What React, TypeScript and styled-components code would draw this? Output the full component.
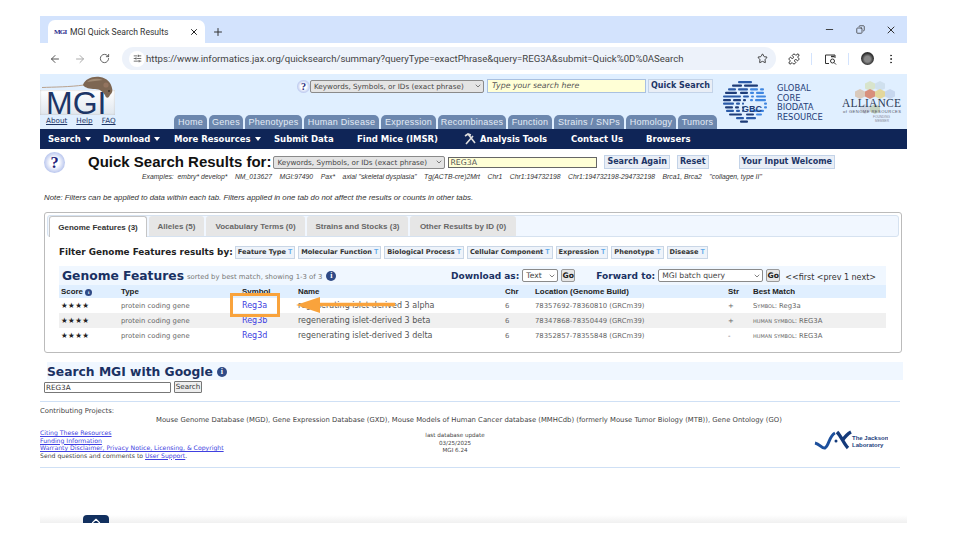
import React from "react";
import styled, { createGlobalStyle } from "styled-components";
import { ArrowLeft, ArrowRight, RotateCw, SlidersHorizontal, Star, Puzzle, X, Plus, Minus, MoreVertical, Copy, ChevronDown, ChevronUp } from "lucide-react";

const GlobalStyle = createGlobalStyle`
  html, body { margin: 0; padding: 0; background: #fff; overflow: hidden; }
  * { box-sizing: border-box; }
`;

const verdana = `"DejaVu Sans", sans-serif`;
const arial = `"Liberation Sans", Arial, sans-serif`;
const navy = "#0f2557";

const Page = styled.div`
  width: 960px;
  height: 540px;
  padding: 16px 53px 0 40px;
  font-family: ${arial};
`;

const Window = styled.div`
  position: relative;
  width: 867px;
  height: 507px;
  background: #fff;
  overflow: hidden;
`;

const TabStrip = styled.div`
  height: 27px;
  background: #d3e3fd;
  display: flex;
  align-items: flex-end;
  padding-left: 8px;
`;

const BrowserTab = styled.div`
  width: 157px;
  height: 23px;
  background: #fff;
  border-radius: 7px 7px 0 0;
  display: flex;
  align-items: center;
  padding: 0 6px;
  font: 8.6px Roboto, sans-serif;
  color: #333;
  svg { color: #222; }
`;

const Favicon = styled.span`
  font: bold 7px "Liberation Serif", serif;
  color: #2a2a8c;
  width: 16px;
  flex: none;
  letter-spacing: -0.8px;
`;

const TabTitle = styled.span`
  flex: 1;
  white-space: nowrap;
`;

const NewTab = styled.div`
  margin: 0 0 5px 7px;
  color: #333;
  display: flex;
`;

const WindowControls = styled.div`
  margin-left: auto;
  align-self: center;
  width: 73px;
  margin-right: 10px;
  display: flex;
  justify-content: space-between;
  color: #333;
`;

const Toolbar = styled.div`
  height: 31px;
  display: flex;
  align-items: center;
  padding-left: 9px;
  color: #555;
`;

const NavIcons = styled.div`
  width: 73px;
  display: flex;
  justify-content: space-between;
  padding-right: 12px;
`;

const UrlPill = styled.div`
  width: 654px;
  height: 23px;
  background: #edf2fa;
  border-radius: 12px;
  display: flex;
  align-items: center;
  padding: 0 8px 0 4px;
  font: 9.6px Roboto, sans-serif;
  color: #444;
`;

const TuneBadge = styled.span`
  width: 16px;
  height: 16px;
  border-radius: 50%;
  background: #fff;
  display: flex;
  align-items: center;
  justify-content: center;
  margin-right: 1px;
  margin-left: 3px;
`;

const UrlText = styled.span`
  flex: 1;
  white-space: nowrap;
`;

const ToolIcons = styled.div`
  flex: 1;
  display: flex;
  align-items: center;
  padding: 0 10px 0 12px;
  justify-content: space-between;
  color: #333;
`;

const Separator = styled.span`
  width: 1px;
  height: 12px;
  background: #d3e3fd;
`;

const Avatar = styled.span`
  width: 13px;
  height: 13px;
  border-radius: 50%;
  background: radial-gradient(circle at 50% 55%, #888 0 30%, #333 60%, #222);
`;

const Header = styled.div`
  height: 55px;
  background: #e0efff;
  display: flex;
`;

const LogoColumn = styled.div`
  width: 134px;
  flex: none;
  position: relative;
`;

const LogoBox = styled.div`
  margin-top: 16px;
  width: 75px;
  height: 25px;
  background: linear-gradient(#ffffff, #dfe6ee);
  box-shadow: inset 0 0 2px #bbb;
  font: 32px/27px ${arial};
  color: #1d3566;
  padding-left: 6px;
`;

const Mouse = styled.svg`
  position: absolute;
  left: 0;
  top: 0;
`;

const LogoLinks = styled.div`
  display: flex;
  gap: 9px;
  padding: 1px 0 0 6px;
  font: 7.2px ${verdana};
  a { color: #1d3566; text-decoration: underline; }
`;

const CenterColumn = styled.div`
  width: 548px;
  flex: none;
  display: flex;
  flex-direction: column;
  justify-content: space-between;
`;

const QuickRow = styled.div`
  display: flex;
  align-items: center;
  padding: 5px 0 0 123px;
`;

const HelpDot = styled.span<{ $size: number }>`
  width: ${(p) => p.$size}px;
  height: ${(p) => p.$size}px;
  flex: none;
  border-radius: 50%;
  background: radial-gradient(circle at 50% 50%, #ffffff 0 30%, #a9b9ea 80%, #8296d8);
  color: #23237a;
  font: bold ${(p) => p.$size * 0.78}px/${(p) => p.$size}px "Liberation Serif", serif;
  text-align: center;
`;

const FakeSelect = styled.span<{ $w: number; $grey?: boolean; $size?: number }>`
  width: ${(p) => p.$w}px;
  flex: none;
  height: 13px;
  border: 1px solid #8a8a8a;
  border-radius: 2px;
  background: ${(p) => (p.$grey ? "#e4e4e4" : "#fff")};
  color: #444;
  font: ${(p) => p.$size ?? 7.2}px/11px ${verdana};
  display: flex;
  align-items: center;
  justify-content: space-between;
  padding: 0 1px 0 3px;
  white-space: nowrap;
  overflow: hidden;
`;

const YellowInput = styled.span<{ $w: number; $dark?: boolean; $italic?: boolean }>`
  width: ${(p) => p.$w}px;
  flex: none;
  height: ${(p) => (p.$dark ? 11 : 14)}px;
  margin-left: 3px;
  background: #ffffd6;
  border: 1px solid ${(p) => (p.$dark ? "#666" : "#a9c0e0")};
  font: ${(p) => (p.$italic ? "italic" : "normal")} 7.8px/${(p) => (p.$dark ? 9 : 12)}px ${verdana};
  color: #555;
  padding-left: ${(p) => (p.$italic ? 4 : 1)}px;
`;

const MgiButton = styled.span<{ $gap?: number }>`
  flex: none;
  height: 14px;
  margin-left: ${(p) => p.$gap ?? 0}px;
  padding: 0 2px;
  background: #e9eef6;
  border: 1px solid #c3d3e8;
  font: bold 8px/12px ${verdana};
  color: #1d3566;
  white-space: nowrap;
`;

const Tabs = styled.div`
  display: flex;
  gap: 2px;
`;

const HeaderTab = styled.span<{ $w: number }>`
  width: ${(p) => p.$w}px;
  height: 14px;
  background: #6c87ae;
  border-radius: 5px 5px 0 0;
  color: #e3ebf5;
  font: 9px/15px ${arial};
  letter-spacing: 0.25px;
  text-align: center;
  white-space: nowrap;
`;

const RightLogos = styled.div`
  flex: 1;
  display: flex;
  align-items: flex-start;
  padding-top: 6px;
`;

const GbcText = styled.div`
  font: 8.4px/9.7px ${verdana};
  color: #1e3c78;
  margin: 4px 0 0 9px;
  width: 65px;
  flex: none;
  font-weight: 500;
`;

const NavBar = styled.div`
  height: 20px;
  background: ${navy};
  display: flex;
  align-items: center;
  color: #fff;
  font: bold 8.5px ${verdana};
`;

const NavItem = styled.span<{ $w: number }>`
  width: ${(p) => p.$w}px;
  flex: none;
  white-space: nowrap;
  display: flex;
  align-items: center;
  gap: 3px;
`;

const Caret = styled.span`
  width: 0;
  height: 0;
  border-left: 3.5px solid transparent;
  border-right: 3.5px solid transparent;
  border-top: 4px solid #fff;
  margin-left: 1px;
`;

const SearchTitleRow = styled.div`
  display: flex;
  align-items: center;
  height: 23px;
  padding: 3px 0 0 4px;
`;

const PageTitle = styled.div`
  font: bold 15px ${arial};
  color: #111;
  margin: -2px 2px 0 23px;
  white-space: nowrap;
`;

const Examples = styled.div`
  height: 9px;
  padding-left: 102px;
  font: italic 6.8px/9px ${arial};
  color: #333;
  white-space: pre;
`;

const Note = styled.div`
  margin-top: 12px;
  height: 9px;
  padding-left: 4px;
  font: italic 7.8px/9px ${arial};
  color: #333;
  white-space: nowrap;
`;

const Panel = styled.div`
  width: 858px;
  height: 141px;
  margin: 10px 0 0 4px;
  border: 1px solid #bbb;
  border-radius: 3px;
  padding: 2px;
`;

const ResultTabs = styled.div`
  height: 22px;
  background: #f1f7ff;
  border: 1px solid #d6e2f0;
  border-radius: 3px;
  display: flex;
  align-items: flex-end;
  padding-left: 1px;
  gap: 2px;
`;

const ResultTab = styled.span<{ $w: number; $active?: boolean }>`
  width: ${(p) => p.$w}px;
  height: ${(p) => (p.$active ? 21 : 20)}px;
  margin-bottom: ${(p) => (p.$active ? -1 : 0)}px;
  background: ${(p) => (p.$active ? "#fff" : "#e6e6e6")};
  border: ${(p) => (p.$active ? "1px solid #c5c5c5" : "none")};
  border-bottom: none;
  border-radius: 3px 3px 0 0;
  color: ${(p) => (p.$active ? "#333" : "#666")};
  font: bold 8px/21px ${arial};
  text-align: center;
  white-space: nowrap;
`;

const FilterRow = styled.div`
  display: flex;
  align-items: center;
  margin-top: 8px;
  height: 14px;
  padding-left: 12px;
  gap: 3px;
`;

const FilterLabel = styled.span`
  font: bold 8.85px ${verdana};
  color: #222;
  white-space: nowrap;
  margin-right: -1px;
`;

const FilterButton = styled.span`
  height: 13px;
  padding: 0 2px;
  background: #eef3fa;
  border: 1px solid #c9d6e6;
  font: bold 6.6px/11px ${verdana};
  color: #333;
  white-space: nowrap;
`;

const FilterMark = styled.i`
  font: bold 7px ${arial};
  color: #5fa8e8;
  margin-left: 2px;
`;

const Results = styled.div`
  margin: 7px 13px 0 12px;
`;

const ResultsBand = styled.div`
  height: 19px;
  background: #f0f7ff;
  display: flex;
  align-items: center;
  padding-left: 3px;
`;

const SectionTitle = styled.div`
  font: bold 12.3px ${verdana};
  color: #1a3163;
  white-space: nowrap;
`;

const TitleGroup = styled.div`
  width: 389px;
  flex: none;
  display: flex;
  align-items: center;
`;

const SortNote = styled.span`
  font: 6.9px ${verdana};
  color: #777;
  margin: 2px 4px 0 3px;
  white-space: nowrap;
`;

const InfoDot = styled.span<{ $size: number }>`
  width: ${(p) => p.$size}px;
  height: ${(p) => p.$size}px;
  flex: none;
  display: inline-block;
  border-radius: 50%;
  background: #2f4a86;
  color: #fff;
  font: bold ${(p) => p.$size - 2}px/${(p) => p.$size}px "Liberation Serif", serif;
  text-align: center;
`;

const BandLabel = styled.span<{ $gap?: number }>`
  font: bold 9px ${verdana};
  color: #1a3163;
  margin-left: ${(p) => p.$gap ?? 0}px;
  margin-right: 3px;
  white-space: nowrap;
`;

const GoButton = styled.span`
  margin-left: 3px;
  width: 14px;
  height: 13px;
  background: #e6e6e6;
  border: 1px solid #999;
  border-radius: 2px;
  font: bold 7.6px/11px ${verdana};
  color: #222;
  text-align: center;
`;

const Pager = styled.span`
  font: 8px ${verdana};
  color: #333;
  margin: 3px 0 0 5px;
  white-space: nowrap;
`;

const rowColumns = "60px 121px 56px 207px 30px 193px 25px 1fr";

const HeadRow = styled.div`
  display: grid;
  grid-template-columns: ${rowColumns};
  height: 13px;
  background: #e0efff;
  padding-left: 2px;
  font: bold 7.9px/13px ${arial};
  color: #222;
  white-space: nowrap;
  align-items: center;
`;

const Row = styled.div<{ $shaded?: boolean }>`
  display: grid;
  grid-template-columns: ${rowColumns};
  height: 15px;
  background: ${(p) => (p.$shaded ? "#f0f0f0" : "#fff")};
  padding-left: 2px;
  font: 6.85px/16px ${verdana};
  color: #666;
  white-space: nowrap;
`;

const Stars = styled.span`
  font: 7.5px/16px "DejaVu Sans", sans-serif;
  color: #222;
  letter-spacing: 0.4px;
`;

const SymbolLink = styled.a`
  font: 8px/16px ${verdana};
  color: #4040e0;
`;

const GeneName = styled.span`
  font: 8px/16px ${verdana};
  color: #555;
`;

const MatchKind = styled.span`
  font-variant: small-caps;
  margin-right: 2px;
`;

const GoogleBand = styled.div`
  width: 856px;
  height: 18px;
  margin: 9px 0 0 7px;
  padding-top: 2px;
  background: #f0f7ff;
  display: flex;
  align-items: center;
  gap: 4px;
`;

const GoogleRow = styled.div`
  display: flex;
  align-items: center;
  gap: 3px;
  padding: 1px 0 0 4px;
`;

const GoogleInput = styled.span`
  width: 127px;
  height: 11px;
  border: 1px solid #777;
  border-radius: 1px;
  font: 7.2px/9px ${verdana};
  color: #333;
  padding-left: 1px;
`;

const GoogleButton = styled.span`
  width: 28px;
  height: 12px;
  background: #eee;
  border: 1px solid #777;
  border-radius: 1px;
  font: 7.2px/10px ${verdana};
  color: #333;
  text-align: center;
`;

const Footer = styled.div`
  width: 860px;
  height: 67px;
  margin-top: 8px;
  border-top: 1px solid #cfe0f5;
  border-bottom: 1px solid #cfe0f5;
  font: 6.85px/7.5px ${verdana};
  color: #444;
  padding-top: 6px;
`;

const ProjectLine = styled.div`
  padding-left: 116px;
  margin-top: 1px;
  white-space: nowrap;
`;

const FooterGrid = styled.div`
  display: grid;
  grid-template-columns: 340px 150px 1fr;
  margin-top: 5px;
  a { color: #4040e0; text-decoration: underline; }
`;

const FooterLinks = styled.div`
  font-size: 6.15px;
`;

const UpdateInfo = styled.div`
  text-align: center;
  padding-top: 3px;
  font-size: 5.6px;
`;

const JaxLogo = styled.div`
  display: flex;
  justify-content: flex-end;
  padding-right: 12px;
  padding-top: 1px;
`;

const BottomFade = styled.div`
  position: absolute;
  left: 0;
  right: 0;
  bottom: 0;
  height: 8px;
  background: linear-gradient(#ffffff, #f0f0f0);
`;

const ScrollTop = styled.div`
  position: absolute;
  left: 43px;
  bottom: 0;
  width: 26px;
  height: 8px;
  background: #12305f;
  border-radius: 4px 4px 0 0;
  color: #fff;
  display: flex;
  justify-content: center;
  overflow: hidden;
  svg { margin-top: -1px; flex: none; }
`;

const Callout = styled.svg`
  position: absolute;
  left: 188px;
  top: 276px;
  pointer-events: none;
`;

const gbcRows = [
  [[16, 14]], [[10, 10], [22, 14]], [[6, 8], [16, 10], [28, 8], [38, 4]], [[3, 12], [18, 8], [28, 4], [34, 8]],
  [[1, 18], [21, 6], [29, 3], [34, 10]], [[1, 8], [11, 8], [21, 3], [28, 3], [33, 11]], [[1, 11], [14, 4], [20, 2], [42, 3]],
  [[3, 8], [13, 4], [20, 2], [42, 3]], [[4, 8], [14, 4], [20, 2], [28, 14]], [[7, 13], [24, 8], [34, 6]], [[14, 8], [24, 10]], [[18, 8]],
];

function GbcLogo() {
  return (
    <svg width="46" height="46" viewBox="0 0 46 46">
      {gbcRows.map((segments, r) =>
        segments.map(([x, w], i) => (
          <rect key={`${r}-${i}`} x={x} y={1 + r * 3.6} width={w} height="2.2" rx="1" fill={x > 26 ? "#3f86e0" : r % 2 ? "#1e3c78" : "#2a5aa8"} />
        ))
      )}
      <text x="20" y="32" fontFamily="Liberation Sans" fontWeight="bold" fontSize="9" fill="#1e3c78">GBC</text>
    </svg>
  );
}

function AllianceLogo() {
  const hexes: [number, number, string][] = [
    [28, 6, "#d8e4cc"], [38, 6, "#cfe0ee"], [18, 14, "#d9c9bb"], [28, 14, "#d88f7c"], [38, 14, "#e3d79c"], [48, 14, "#c7d7ee"], [23, 29, "#cfd8e4"], [33, 29, "#c5d4c0"],
  ];
  return (
    <svg width="60" height="46" viewBox="0 0 60 46">
      {hexes.map(([x, y, c], i) => (
        <polygon key={i} fill={c} points={`${x},${y - 5} ${x + 5},${y - 2.5} ${x + 5},${y + 2.5} ${x},${y + 5} ${x - 5},${y + 2.5} ${x - 5},${y - 2.5}`} />
      ))}
      <text x="0" y="27" fontFamily="Liberation Serif" fontSize="11.5" fill="#2b3a55" textLength="59">ALLIANCE</text>
      <text x="1" y="32.5" fontFamily="Liberation Sans" fontSize="4.1" fill="#556" textLength="58">of GENOME RESOURCES</text>
      <text x="31" y="38" fontFamily="Liberation Sans" fontSize="3.2" fill="#889">FOUNDING</text>
      <text x="33" y="42" fontFamily="Liberation Sans" fontSize="3.2" fill="#889">MEMBER</text>
    </svg>
  );
}

function MouseArt() {
  return (
    <Mouse width="76" height="26" viewBox="0 0 76 26">
      <path d="M2 13.5 C14 13 30 13 44 11" stroke="#b9a28e" strokeWidth="1" fill="none" />
      <path d="M43 11 C45 5 52 2 60 3 C67 4 71 9 72 14 C73 17 72 19 70 21 C69 24 66 25 65 21 C63 18 60 15 55 15 C50 15 45 14 43 11 Z" fill="#7d6652" />
      <path d="M47 8 C51 4 58 4 63 6 C58 7 52 7 47 8 Z" fill="#a08a74" />
      <circle cx="66" cy="11" r="2.6" fill="#93745f" />
      <circle cx="69" cy="17" r="0.8" fill="#111" />
    </Mouse>
  );
}

const navItems: [string, number, boolean][] = [
  ["Search", 55, true], ["Download", 71, true], ["More Resources", 100, true], ["Submit Data", 83, false], ["Find Mice (IMSR)", 107, false],
];
const headerTabs: [string, number][] = [
  ["Home", 33], ["Genes", 34], ["Phenotypes", 57], ["Human Disease", 75], ["Expression", 55], ["Recombinases", 68], ["Function", 44], ["Strains / SNPs", 70], ["Homology", 50], ["Tumors", 39],
];
const resultTabs: [string, number][] = [
  ["Alleles (5)", 55], ["Vocabulary Terms (0)", 99], ["Strains and Stocks (3)", 101], ["Other Results by ID (0)", 106],
];
const filters = ["Feature Type", "Molecular Function", "Biological Process", "Cellular Component", "Expression", "Phenotype", "Disease"];
const genes = [
  { symbol: "Reg3a", name: "regenerating islet-derived 3 alpha", location: "78357692-78360810 (GRCm39)", strand: "+", kind: "Symbol:", match: "Reg3a" },
  { symbol: "Reg3b", name: "regenerating islet-derived 3 beta", location: "78347868-78350449 (GRCm39)", strand: "+", kind: "human symbol:", match: "REG3A" },
  { symbol: "Reg3d", name: "regenerating islet-derived 3 delta", location: "78352857-78355848 (GRCm39)", strand: "-", kind: "human symbol:", match: "REG3A" },
];

export default function App() {
  return (
    <Page>
      <GlobalStyle />
      <Window>
        <TabStrip>
          <BrowserTab>
            <Favicon>MGI</Favicon>
            <TabTitle>MGI Quick Search Results</TabTitle>
            <X size={10} strokeWidth={2.4} />
          </BrowserTab>
          <NewTab><Plus size={12} /></NewTab>
          <WindowControls>
            <Minus size={11} />
            <Copy size={9} style={{ transform: "scaleX(-1)", marginTop: 1 }} />
            <X size={12} />
          </WindowControls>
        </TabStrip>
        <Toolbar>
          <NavIcons>
            <ArrowLeft size={12} />
            <ArrowRight size={12} color="#aaa" />
            <RotateCw size={11} />
          </NavIcons>
          <UrlPill>
            <TuneBadge><SlidersHorizontal size={9} /></TuneBadge>
            <UrlText>https://www.informatics.jax.org/quicksearch/summary?queryType=exactPhrase&amp;query=REG3A&amp;submit=Quick%0D%0ASearch</UrlText>
            <Star size={11} color="#333" />
          </UrlPill>
          <ToolIcons>
            <Puzzle size={12} />
            <Separator />
            <svg width="13" height="12" viewBox="0 0 13 12" fill="none" stroke="#333">
              <path d="M5 10.5H1.5V2H11V5" />
              <circle cx="8.5" cy="8" r="2" />
              <path d="M10 9.5l2 2" />
              <path d="M7 3.5h3.5" strokeWidth="1.5" />
            </svg>
            <Separator />
            <Avatar />
            <MoreVertical size={12} />
          </ToolIcons>
        </Toolbar>
        <Header>
          <LogoColumn>
            <LogoBox>MGI</LogoBox>
            <MouseArt />
            <LogoLinks>
              <a>About</a>
              <a>Help</a>
              <a>FAQ</a>
            </LogoLinks>
          </LogoColumn>
          <CenterColumn>
            <QuickRow>
              <HelpDot $size={13}>?</HelpDot>
              <FakeSelect $w={174} $grey>Keywords, Symbols, or IDs (exact phrase)<ChevronDown size={8} /></FakeSelect>
              <YellowInput $w={159} $italic>Type your search here</YellowInput>
              <MgiButton $gap={2}>Quick Search</MgiButton>
            </QuickRow>
            <Tabs>
              {headerTabs.map(([label, w]) => (
                <HeaderTab key={label} $w={w}>{label}</HeaderTab>
              ))}
            </Tabs>
          </CenterColumn>
          <RightLogos>
            <GbcLogo />
            <GbcText>GLOBAL<br />CORE<br />BIODATA<br />RESOURCE</GbcText>
            <AllianceLogo />
          </RightLogos>
        </Header>
        <NavBar>
          <NavItem $w={8} />
          {navItems.map(([label, w, caret]) => (
            <NavItem key={label} $w={w}>{label}{caret && <Caret />}</NavItem>
          ))}
          <NavItem $w={107}>
            <svg width="13" height="12" viewBox="0 0 13 12" stroke="#ddd" strokeWidth="1.6" fill="none">
              <path d="M2 11L9 3M4 1l7 9M1 3l3-2 3 1" />
            </svg>
            Analysis Tools
          </NavItem>
          <NavItem $w={75}>Contact Us</NavItem>
          <NavItem $w={60}>Browsers</NavItem>
        </NavBar>
        <SearchTitleRow>
          <HelpDot $size={21}>?</HelpDot>
          <PageTitle>Quick Search Results for:</PageTitle>
          <FakeSelect $w={172} $grey>Keywords, Symbols, or IDs (exact phrase)<ChevronDown size={8} /></FakeSelect>
          <YellowInput $w={149} $dark>REG3A</YellowInput>
          <MgiButton $gap={7}>Search Again</MgiButton>
          <MgiButton $gap={7}>Reset</MgiButton>
          <MgiButton $gap={30}>Your Input Welcome</MgiButton>
        </SearchTitleRow>
        <Examples>{'Examples:  embry* develop*    NM_013627    MGI:97490    Pax*    axial "skeletal dysplasia"    Tg(ACTB-cre)2Mrt    Chr1    Chr1:194732198    Chr1:194732198-294732198    Brca1, Brca2    "collagen, type II"'}</Examples>
        <Note>Note: Filters can be applied to data within each tab. Filters applied in one tab do not affect the results or counts in other tabs.</Note>
        <Panel>
          <ResultTabs>
            <ResultTab $w={98} $active>Genome Features (3)</ResultTab>
            {resultTabs.map(([label, w]) => (
              <ResultTab key={label} $w={w}>{label}</ResultTab>
            ))}
          </ResultTabs>
          <FilterRow>
            <FilterLabel>Filter Genome Features results by:</FilterLabel>
            {filters.map((label) => (
              <FilterButton key={label}>{label}<FilterMark>T</FilterMark></FilterButton>
            ))}
          </FilterRow>
          <Results>
            <ResultsBand>
              <TitleGroup>
                <SectionTitle>Genome Features</SectionTitle>
                <SortNote>sorted by best match, showing 1-3 of 3</SortNote>
                <InfoDot $size={10}>i</InfoDot>
              </TitleGroup>
              <BandLabel>Download as:</BandLabel>
              <FakeSelect $w={36} $size={7.6}>Text<ChevronDown size={8} /></FakeSelect>
              <GoButton>Go</GoButton>
              <BandLabel $gap={21}>Forward to:</BandLabel>
              <FakeSelect $w={105} $size={7.6}>MGI batch query<ChevronDown size={8} /></FakeSelect>
              <GoButton>Go</GoButton>
              <Pager>&lt;&lt;first &lt;prev 1 next&gt;</Pager>
            </ResultsBand>
            <HeadRow>
              <span>Score <InfoDot $size={7}>i</InfoDot></span>
              <span>Type</span>
              <span>Symbol</span>
              <span>Name</span>
              <span>Chr</span>
              <span>Location (Genome Build)</span>
              <span>Str</span>
              <span>Best Match</span>
            </HeadRow>
            {genes.map((g, i) => (
              <Row key={g.symbol} $shaded={i === 1}>
                <Stars>★★★★</Stars>
                <span>protein coding gene</span>
                <SymbolLink>{g.symbol}</SymbolLink>
                <GeneName>{g.name}</GeneName>
                <span>6</span>
                <span>{g.location}</span>
                <span>{g.strand}</span>
                <span><MatchKind>{g.kind}</MatchKind>{g.match}</span>
              </Row>
            ))}
          </Results>
        </Panel>
        <GoogleBand>
          <SectionTitle>Search MGI with Google</SectionTitle>
          <InfoDot $size={10}>i</InfoDot>
        </GoogleBand>
        <GoogleRow>
          <GoogleInput>REG3A</GoogleInput>
          <GoogleButton>Search</GoogleButton>
        </GoogleRow>
        <Footer>
          <div>Contributing Projects:</div>
          <ProjectLine>Mouse Genome Database (MGD), Gene Expression Database (GXD), Mouse Models of Human Cancer database (MMHCdb) (formerly Mouse Tumor Biology (MTB)), Gene Ontology (GO)</ProjectLine>
          <FooterGrid>
            <FooterLinks>
              <a>Citing These Resources</a><br />
              <a>Funding Information</a><br />
              <a>Warranty Disclaimer, Privacy Notice, Licensing, &amp; Copyright</a><br />
              Send questions and comments to <a>User Support</a>.
            </FooterLinks>
            <UpdateInfo>last database update<br />03/25/2025<br />MGI 6.24</UpdateInfo>
            <JaxLogo>
              <svg width="74" height="20" viewBox="0 0 74 20" fill="none">
                <path d="M1 13 C6 14 8 19 11 18 C15 16 15 6 21 3" stroke="#1c4f9c" strokeWidth="3" />
                <path d="M23 2 C27 6 30 14 34 18 M37 2 C33 4 30 8 28 11" stroke="#143a7a" strokeWidth="3.4" />
                <circle cx="22" cy="11" r="1.5" fill="#143a7a" />
                <text x="38" y="10" fontFamily="Liberation Sans" fontWeight="bold" fontSize="6" fill="#1c3f80">The Jackson</text>
                <text x="38" y="16.5" fontFamily="Liberation Sans" fontWeight="bold" fontSize="6" fill="#1c3f80">Laboratory</text>
              </svg>
            </JaxLogo>
          </FooterGrid>
        </Footer>
        <BottomFade />
        <ScrollTop><ChevronUp size={14} /></ScrollTop>
        <Callout width="180" height="30" viewBox="0 0 180 30" fill="none">
          <rect x="3.5" y="2.5" width="47" height="21" stroke="#f9a33c" strokeWidth="3" />
          <path d="M167 12.5H92" stroke="#f9a33c" strokeWidth="3.5" />
          <path d="M68 13L92 5V21Z" fill="#f9a33c" />
        </Callout>
      </Window>
    </Page>
  );
}
